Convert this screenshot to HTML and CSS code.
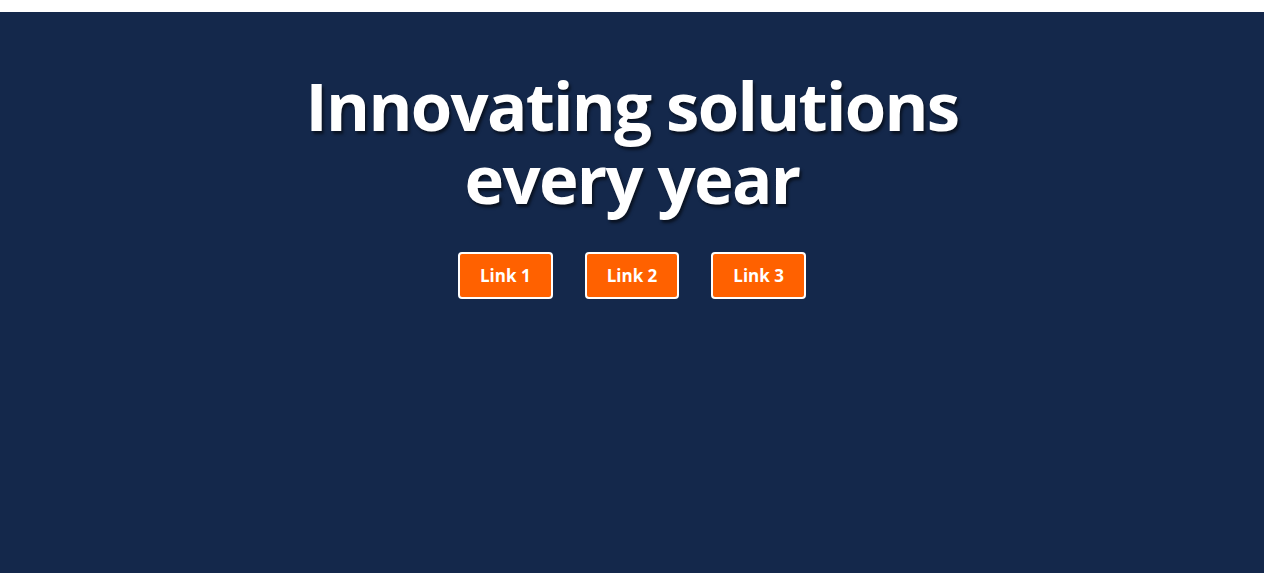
FILE: index.html
```html
<!DOCTYPE html>
<html lang="en">
<head>
<meta charset="utf-8">
<title>Innovating solutions</title>
<link rel="stylesheet" href="styles.css">
</head>
<body>
<section class="hero">
  <h1 class="hero-title">Innovating solutions<br>every year</h1>
  <nav class="hero-links">
    <a class="btn" href="#">Link 1</a>
    <a class="btn" href="#">Link 2</a>
    <a class="btn" href="#">Link 3</a>
  </nav>
</section>
</body>
</html>
```
FILE: styles.css
```css
html, body {
  margin: 0;
  padding: 0;
  background: #ffffff;
}
body {
  padding-top: 12px;
  font-family: "Open Sans", "Liberation Sans", sans-serif;
}
.hero {
  background: #14284b;
  min-height: 561px;
  box-sizing: border-box;
  padding-top: 57px;
  display: flex;
  flex-direction: column;
  align-items: center;
}
.hero-title {
  margin: 0;
  color: #ffffff;
  font-size: 67px;
  line-height: 73px;
  font-weight: 700;
  text-align: center;
  letter-spacing: -1.7px;
  text-shadow: 2px 3px 3px rgba(0, 0, 0, 0.55);
}
.hero-links {
  margin-top: 37px;
  display: flex;
  gap: 32px;
}
.btn {
  display: block;
  background: #ff6100;
  color: #ffffff;
  border: 2px solid #ffffff;
  border-radius: 4px;
  padding: 8px 20px;
  font-size: 17px;
  line-height: 27px;
  font-weight: 700;
  text-decoration: none;
}
```
